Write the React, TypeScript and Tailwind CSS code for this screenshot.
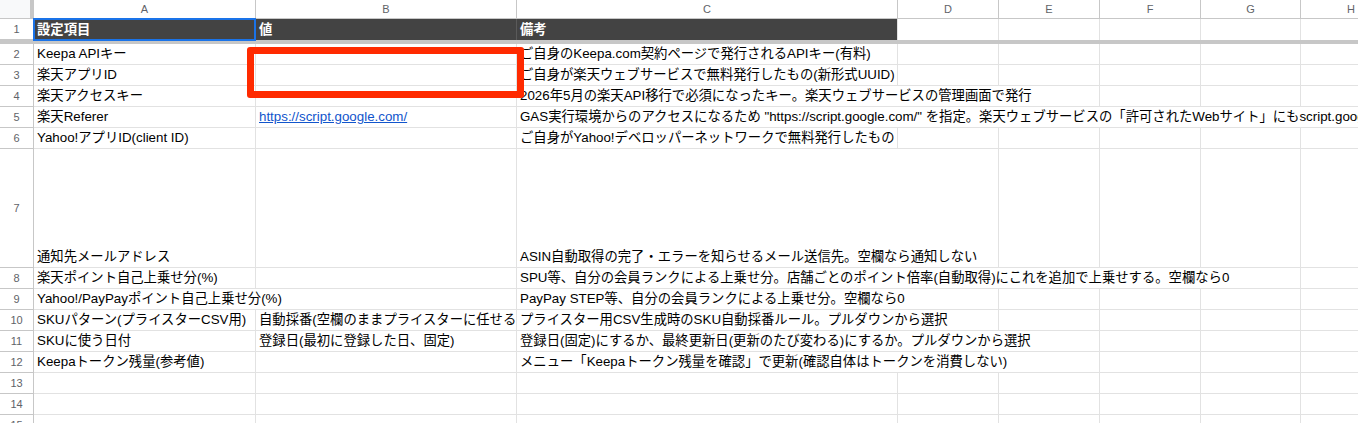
import React from "react";

const COLS =
  "grid grid-cols-[34px_222px_261px_381px_101px_101px_101px_100px_101px]";

const SPAN: Record<number, string> = {
  1: "",
  2: "col-span-2",
  3: "col-span-3",
  4: "col-span-4",
  5: "col-span-5",
  6: "col-span-6",
};

type Cell = { t?: string; span?: number; link?: boolean };
type Row = { n: number; tall?: boolean; cells: Cell[] };

const E: Cell = {};

const rows: Row[] = [
  {
    n: 2,
    cells: [
      { t: "Keepa APIキー" },
      E,
      { t: "ご自身のKeepa.com契約ページで発行されるAPIキー(有料)" },
      E, E, E, E, E,
    ],
  },
  {
    n: 3,
    cells: [
      { t: "楽天アプリID" },
      E,
      { t: "ご自身が楽天ウェブサービスで無料発行したもの(新形式UUID)" },
      E, E, E, E, E,
    ],
  },
  {
    n: 4,
    cells: [
      { t: "楽天アクセスキー" },
      E,
      {
        t: "2026年5月の楽天API移行で必須になったキー。楽天ウェブサービスの管理画面で発行",
        span: 3,
      },
      E, E, E,
    ],
  },
  {
    n: 5,
    cells: [
      { t: "楽天Referer" },
      { t: "https://script.google.com/", link: true },
      {
        t: 'GAS実行環境からのアクセスになるため "https://script.google.com/" を指定。楽天ウェブサービスの「許可されたWebサイト」にもscript.google.comを登録',
        span: 6,
      },
    ],
  },
  {
    n: 6,
    cells: [
      { t: "Yahoo!アプリID(client ID)" },
      E,
      { t: "ご自身がYahoo!デベロッパーネットワークで無料発行したもの" },
      E, E, E, E, E,
    ],
  },
  {
    n: 7,
    tall: true,
    cells: [
      { t: "通知先メールアドレス" },
      E,
      {
        t: "ASIN自動取得の完了・エラーを知らせるメール送信先。空欄なら通知しない",
        span: 2,
      },
      E, E, E, E,
    ],
  },
  {
    n: 8,
    cells: [
      { t: "楽天ポイント自己上乗せ分(%)" },
      E,
      {
        t: "SPU等、自分の会員ランクによる上乗せ分。店舗ごとのポイント倍率(自動取得)にこれを追加で上乗せする。空欄なら0",
        span: 5,
      },
      E,
    ],
  },
  {
    n: 9,
    cells: [
      { t: "Yahoo!/PayPayポイント自己上乗せ分(%)", span: 2 },
      { t: "PayPay STEP等、自分の会員ランクによる上乗せ分。空欄なら0", span: 2 },
      E, E, E, E,
    ],
  },
  {
    n: 10,
    cells: [
      { t: "SKUパターン(プライスターCSV用)" },
      { t: "自動採番(空欄のままプライスターに任せる)" },
      { t: "プライスター用CSV生成時のSKU自動採番ルール。プルダウンから選択", span: 2 },
      E, E, E, E,
    ],
  },
  {
    n: 11,
    cells: [
      { t: "SKUに使う日付" },
      { t: "登録日(最初に登録した日、固定)" },
      {
        t: "登録日(固定)にするか、最終更新日(更新のたび変わる)にするか。プルダウンから選択",
        span: 3,
      },
      E, E, E,
    ],
  },
  {
    n: 12,
    cells: [
      { t: "Keepaトークン残量(参考値)" },
      E,
      {
        t: "メニュー「Keepaトークン残量を確認」で更新(確認自体はトークンを消費しない)",
        span: 3,
      },
      E, E, E,
    ],
  },
  { n: 13, cells: [E, E, E, E, E, E, E, E] },
  { n: 14, cells: [E, E, E, E, E, E, E, E] },
  { n: 15, cells: [E, E, E, E, E, E, E, E] },
];

const LETTERS = ["A", "B", "C", "D", "E", "F", "G", "H"];

const FONT = "font-['Liberation_Sans','Noto_Sans_CJK_JP',sans-serif]";

function RowHead({ n }: { n: number }) {
  return (
    <div className="flex items-center justify-center border-r border-b border-[#c7c7c7] text-[11px] text-[#5f6368]">
      {n}
    </div>
  );
}

function DataCell({ cell }: { cell: Cell }) {
  return (
    <div
      className={`flex items-end overflow-hidden whitespace-nowrap border-r border-b border-[#e2e2e2] px-[3px] pb-[2px] text-[13.333px] leading-[17px] text-black ${SPAN[cell.span ?? 1]}`}
    >
      {cell.link ? (
        <span className="text-[#1155cc] underline">{cell.t}</span>
      ) : (
        <span>{cell.t}</span>
      )}
    </div>
  );
}

export default function App() {
  return (
    <div className={`relative h-[423px] w-[1358px] overflow-hidden bg-white ${FONT}`}>
      {/* column letters */}
      <div className={`${COLS} h-[19px]`}>
        <div className="border-r-4 border-b border-[#c7c7c7] bg-[#f8f9fa]" />
        {LETTERS.map((l) => (
          <div
            key={l}
            className="flex items-center justify-center border-r border-b border-[#c7c7c7] text-[11px] text-[#5f6368]"
          >
            {l}
          </div>
        ))}
      </div>

      {/* header row */}
      <div className={`${COLS} h-[21px]`}>
        <RowHead n={1} />
        <div className="relative flex items-end border-r border-[#e2e2e2] bg-[#434343] px-[3px] pb-[2px] text-[13.333px] font-bold leading-[17px] text-white">
          設定項目
          <div className="absolute -top-px -left-px -right-px -bottom-px border-2 border-[#1a73e8]" />
        </div>
        <div className="flex items-end border-r border-[#5a5a5a] bg-[#434343] px-[3px] pb-[2px] text-[13.333px] font-bold leading-[17px] text-white">
          値
        </div>
        <div className="flex items-end border-r border-[#e2e2e2] bg-[#434343] px-[3px] pb-[2px] text-[13.333px] font-bold leading-[17px] text-white">
          備考
        </div>
        {LETTERS.slice(3).map((l) => (
          <div key={l} className="border-r border-[#e2e2e2]" />
        ))}
      </div>
      <div className="h-[4px] bg-[#c7c7c7]" />

      {/* data rows */}
      {rows.map((row) => (
        <div key={row.n} className={`${COLS} ${row.tall ? "h-[119px]" : "h-[21px]"}`}>
          <RowHead n={row.n} />
          {row.cells.map((c, i) => (
            <DataCell key={i} cell={c} />
          ))}
        </div>
      ))}

      {/* red annotation box */}
      <div className="absolute left-[247px] top-[47px] h-[51px] w-[277px] rounded-[3px] border-[7px] border-[#ff2a00]" />
    </div>
  );
}
